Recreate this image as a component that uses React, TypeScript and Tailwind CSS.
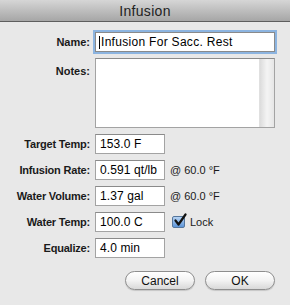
import React from 'react';

const font = "font-['Lucida_Grande','Liberation_Sans',Arial,sans-serif]";

const Field = ({ label, value, extra }: { label: string; value: string; extra?: React.ReactNode }) => (
    <div className="flex items-center h-[20px]">
        <label className="w-[91px] pr-[1px] text-right text-[11px] font-bold text-[#1a1a1a] tracking-[-0.2px]">{label}</label>
        <div className="ml-[4px] w-[70px] h-[20px] bg-white border border-[#a3a3a3] border-t-[#8a8a8a] px-[4px] flex items-center text-[12px] tracking-[0.1px] text-black">
            {value}
        </div>
        {extra}
    </div>
);

const AtTemp = () => <span className="ml-[5px] text-[11px] text-[#1a1a1a]">@ 60.0 °F</span>;

export default function App() {
    return (
        <div className={`w-[290px] h-[305px] bg-[#e8e8e8] flex flex-col ${font}`}>
            {/* title bar */}
            <div className="h-[22px] shrink-0 bg-gradient-to-b from-[#d6d6d6] to-[#a6a6a6] border-b border-[#5e5e5e] flex items-center justify-center">
                <span className="text-[14px] text-[#222] leading-none tracking-[0.3px]">Infusion</span>
            </div>

            <div className="flex flex-col">
                {/* name */}
                <div className="flex items-center mt-[10px] h-[20px]">
                    <label className="w-[91px] pr-[1px] text-right text-[11px] font-bold text-[#1a1a1a]">Name:</label>
                    <div className="ml-[4px] w-[180px] h-[20px] bg-white border border-[#8a8a8a] ring-2 ring-[#8cb4e0] px-[3px] flex items-center text-[12px] tracking-[0.3px] text-black">
                        <span className="w-[1px] h-[13px] bg-black mr-[1px]" />
                        Infusion For Sacc. Rest
                    </div>
                </div>

                {/* notes */}
                <div className="flex mt-[6px]">
                    <label className="w-[91px] pr-[1px] pt-[5px] text-right text-[11px] font-bold text-[#1a1a1a]">Notes:</label>
                    <div className="ml-[4px] w-[180px] h-[70px] bg-white border border-[#a3a3a3] border-t-[#8a8a8a] flex justify-end">
                        <div className="w-[15px] h-full bg-gradient-to-r from-[#dcdcdc] via-[#f4f4f4] to-[#e6e6e6] border-l border-[#e0e0e0]" />
                    </div>
                </div>

                <div className="flex flex-col gap-[6px] mt-[6px]">
                    <Field label="Target Temp:" value="153.0 F" />
                    <Field label="Infusion Rate:" value="0.591 qt/lb" extra={<AtTemp />} />
                    <Field label="Water Volume:" value="1.37 gal" extra={<AtTemp />} />
                    <Field
                        label="Water Temp:"
                        value="100.0 C"
                        extra={
                            <div className="flex items-center ml-[7px]">
                                <div className="w-[13px] h-[12px] bg-gradient-to-b from-[#b6d3f3] to-[#5d95d8] border border-[#55769c] rounded-[2px] relative">
                                    <svg className="absolute -top-[4px] left-[0px]" width="15" height="15" viewBox="0 0 15 15">
                                        <path d="M2.5 7.5 L5.5 11.5 L12.5 1.5" fill="none" stroke="#111" strokeWidth="2.2" strokeLinecap="round" strokeLinejoin="round" />
                                    </svg>
                                </div>
                                <span className="ml-[5px] text-[11px] text-[#1a1a1a]">Lock</span>
                            </div>
                        }
                    />
                    <Field label="Equalize:" value="4.0 min" />
                </div>

                {/* buttons */}
                <div className="flex justify-end gap-[10px] pr-[15px] mt-[13px]">
                    <button className="w-[70px] h-[19px] rounded-full border border-[#8e8e8e] bg-gradient-to-b from-white via-[#f3f3f3] to-[#d9d9d9] text-[12px] text-[#111] leading-none shadow-[0_1px_1px_rgba(0,0,0,0.15)]">Cancel</button>
                    <button className="w-[70px] h-[19px] rounded-full border border-[#8e8e8e] bg-gradient-to-b from-white via-[#f3f3f3] to-[#d9d9d9] text-[12px] text-[#111] leading-none shadow-[0_1px_1px_rgba(0,0,0,0.15)]">OK</button>
                </div>
            </div>
        </div>
    );
}
